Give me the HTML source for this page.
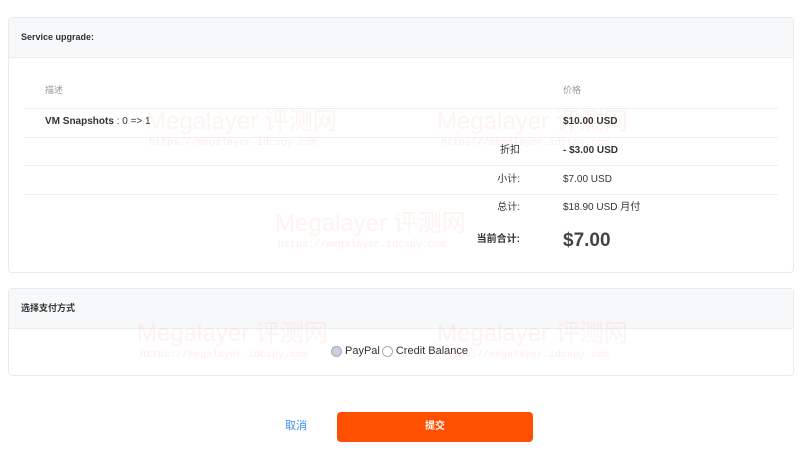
<!DOCTYPE html>
<html><head><meta charset="utf-8"><style>
*{margin:0;padding:0;box-sizing:border-box}
body{width:800px;height:463px;background:#fff;font-family:"Liberation Sans","Noto Sans CJK SC",sans-serif;color:#333;position:relative;overflow:hidden;font-size:10px}
.card{position:absolute;left:8px;width:786px;border:1px solid #e8eaee;border-radius:4px;background:#fff}
.hd{height:40px;background:#f7f8fa;border-bottom:1px solid #eceef2;padding:0 12px;line-height:38px;font-weight:bold;font-size:9px;color:#333}
.t{position:absolute;font-size:10px;color:#333;line-height:12px}
.line{position:absolute;left:24px;width:754px;height:1px;background:#eceef2}
.wm{position:absolute;font-size:24px;color:rgba(240,120,100,0.09);white-space:nowrap;z-index:5;line-height:28px}
.wu{position:absolute;font-family:"Liberation Mono",monospace;font-size:10px;color:rgba(240,120,100,0.14);white-space:nowrap;z-index:5}
.r{text-align:right;width:100px}
</style></head><body>
<div class="card" style="top:17px;height:256px"><div class="hd">Service upgrade:</div></div>
<div class="t" style="left:45px;top:84px;color:#999;font-size:9px">描述</div>
<div class="t" style="left:563px;top:84px;color:#999;font-size:9px">价格</div>
<div class="line" style="top:108px"></div>
<div class="t" style="left:45px;top:116px;font-weight:bold">VM Snapshots <span style="font-weight:normal">: 0 =&gt; 1</span></div>
<div class="t" style="left:563px;top:116px;font-weight:bold">$10.00 USD</div>
<div class="line" style="top:137px"></div>
<div class="t r" style="left:420px;top:145px">折扣</div>
<div class="t" style="left:563px;top:145px;font-weight:bold">- $3.00 USD</div>
<div class="line" style="top:165px"></div>
<div class="t r" style="left:420px;top:174px">小计:</div>
<div class="t" style="left:563px;top:174px">$7.00 USD</div>
<div class="line" style="top:194px"></div>
<div class="t r" style="left:420px;top:202px">总计:</div>
<div class="t" style="left:563px;top:202px">$18.90 USD 月付</div>
<div class="t r" style="left:420px;top:234px;font-weight:bold">当前合计:</div>
<div class="t" style="left:563px;top:231px;font-size:19px;line-height:20px;font-weight:bold;color:#444">$7.00</div>

<div class="card" style="top:288px;height:88px"><div class="hd">选择支付方式</div></div>
<div class="t" style="left:331px;top:345px;font-size:11px;display:flex;align-items:center">
<span style="width:11px;height:11px;border-radius:50%;background:#c8d0dc;border:1px solid #aab;display:inline-block;margin-right:3px"></span>PayPal<span style="width:11px;height:11px;border-radius:50%;border:1px solid #aab;display:inline-block;margin:0 3px 0 2px"></span>Credit Balance</div>

<div class="t" style="left:285px;top:420px;color:#3b8ff0;font-size:11px">取消</div>
<div style="position:absolute;left:337px;top:412px;width:196px;height:30px;background:#ff4f00;border-radius:4px;color:#fff;font-size:10px;font-weight:bold;text-align:center;line-height:30px">提交</div>

<div class="wm" style="left:146px;top:108px">Megalayer 评测网</div><div class="wu" style="left:149px;top:138px">https://megalayer.idcspy.com</div>
<div class="wm" style="left:437px;top:108px">Megalayer 评测网</div><div class="wu" style="left:441px;top:138px">https://megalayer.idcspy.com</div>
<div class="wm" style="left:275px;top:210px">Megalayer 评测网</div><div class="wu" style="left:278px;top:240px">https://megalayer.idcspy.com</div>
<div class="wm" style="left:137px;top:320px">Megalayer 评测网</div><div class="wu" style="left:140px;top:350px">https://megalayer.idcspy.com</div>
<div class="wm" style="left:437px;top:320px">Megalayer 评测网</div><div class="wu" style="left:441px;top:350px">https://megalayer.idcspy.com</div>
</body></html>
